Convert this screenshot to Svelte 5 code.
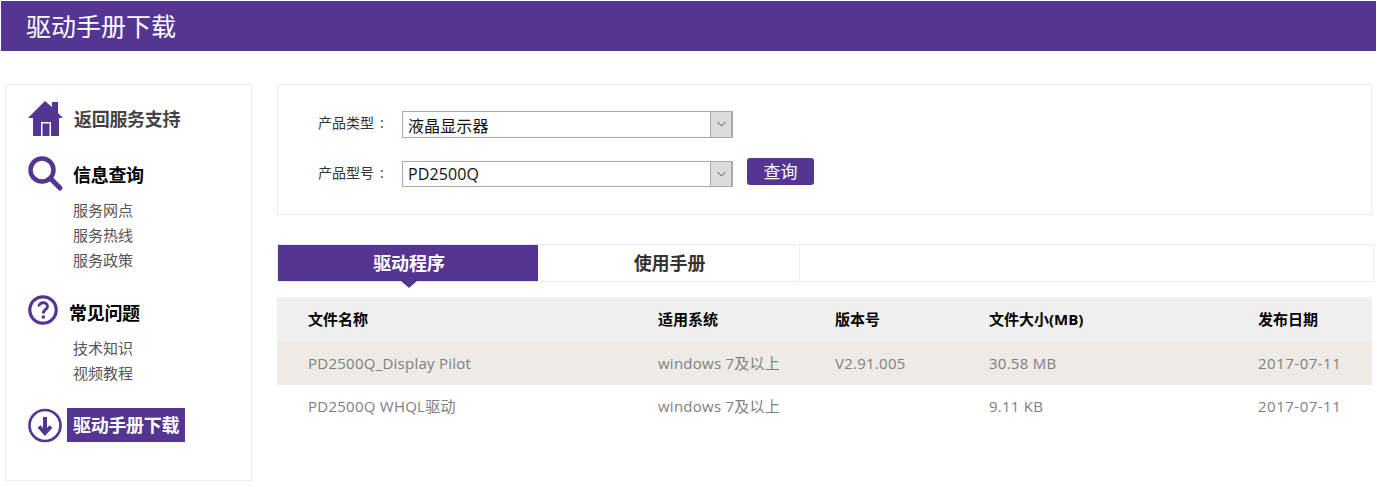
<script>
  const files = [
    { name: 'PD2500Q_Display Pilot', os: 'windows 7及以上', ver: 'V2.91.005', size: '30.58 MB', date: '2017-07-11' },
    { name: 'PD2500Q WHQL驱动', os: 'windows 7及以上', ver: '', size: '9.11 KB', date: '2017-07-11' }
  ];
</script>

<div class="page">
  <header class="top"><h1>驱动手册下载</h1></header>

  <div class="content">
    <aside class="side">
      <a class="item home">
        <svg class="ic" width="36" height="36" viewBox="0 0 36 36"><path fill="#553592" fill-rule="evenodd" d="M17 1 L24 7 V2 H30 V13 L35 18 H31 V36 H5 V18 H0 Z M13 22 V36 H14.500 V23.500 H21.500 V36 H23 V22 Z"/></svg>
        <span class="t1 grey">返回服务支持</span>
      </a>

      <div class="group search">
        <div class="item">
          <svg class="ic" width="36" height="36" viewBox="0 0 36 36"><circle cx="14" cy="14" r="11.500" fill="none" stroke="#553592" stroke-width="4.500"/><path d="M23 23 L32 32" stroke="#553592" stroke-width="5" stroke-linecap="round"/></svg>
          <span class="t1">信息查询</span>
        </div>
        <ul><li>服务网点</li><li>服务热线</li><li>服务政策</li></ul>
      </div>

      <div class="group faq">
        <div class="item">
          <svg class="ic small" width="31" height="31" viewBox="0 0 31 31"><circle cx="15" cy="15" r="13.200" fill="none" stroke="#553592" stroke-width="3.200"/><path d="M11 11.500 C11 6.500 19.500 6.500 19.500 11.500 C19.500 14.500 15.300 14.500 15.300 18.500" fill="none" stroke="#553592" stroke-width="2.800"/><circle cx="15.300" cy="22" r="1.800" fill="#553592"/></svg>
          <span class="t1">常见问题</span>
        </div>
        <ul><li>技术知识</li><li>视频教程</li></ul>
      </div>

      <div class="item current">
        <svg class="ic" width="35" height="35" viewBox="0 0 35 35"><circle cx="17" cy="17.500" r="15.500" fill="none" stroke="#553592" stroke-width="2.600"/><path d="M17 9 V24 M11 18.500 L17 25 L23 18.500" fill="none" stroke="#553592" stroke-width="4"/></svg>
        <span class="t1 active">驱动手册下载</span>
      </div>
    </aside>

    <main class="main">
      <section class="filter">
        <div class="row">
          <span class="label">产品类型<span class="colon">:</span></span>
          <div class="select"><span class="value">液晶显示器</span><span class="arrow"><svg width="11" height="7" viewBox="0 0 11 7"><path d="M1.500 1 L5.500 5 L9.500 1" fill="none" stroke="#555" stroke-width="1"/></svg></span></div>
        </div>
        <div class="row second">
          <span class="label">产品型号<span class="colon">:</span></span>
          <div class="select"><span class="value">PD2500Q</span><span class="arrow"><svg width="11" height="7" viewBox="0 0 11 7"><path d="M1.500 1 L5.500 5 L9.500 1" fill="none" stroke="#555" stroke-width="1"/></svg></span></div>
          <button class="query">查询</button>
        </div>
      </section>

      <nav class="tabs">
        <div class="tab on">驱动程序</div>
        <div class="tab">使用手册</div>
      </nav>

      <div class="table">
        <div class="tr head">
          <div>文件名称</div><div>适用系统</div><div>版本号</div><div>文件大小(MB)</div><div>发布日期</div>
        </div>
        {#each files as f, i}
          <div class="tr" class:odd={i === 0}>
            <div>{f.name}</div><div>{f.os}</div><div>{f.ver}</div><div>{f.size}</div><div>{f.date}</div>
          </div>
        {/each}
      </div>
    </main>
  </div>
</div>

<style>
  :global(body) { margin: 0; background: #fff; }
  .page { font-family: "Open Sans", "Noto Sans CJK SC", sans-serif; height: 487px; overflow: hidden; padding-top: 1px; box-sizing: border-box; }
  .top { margin: 0 1px; height: 50px; background: #553592; display: flex; align-items: center; padding-left: 25px; }
  h1 { margin: 0; font-size: 25px; font-weight: 400; color: #fff; line-height: 1; }
  .content { display: flex; gap: 25px; margin-top: 33px; padding-left: 5px; }

  .side { width: 247px; height: 397px; box-sizing: border-box; border: 1px solid #ececec; padding: 15px 0 0 22px; flex: none; }
  .item { display: flex; align-items: center; height: 36px; }
  .ic { flex: none; display: block; }
  .t1 { font-size: 18px; font-weight: 700; color: #000; line-height: 1; margin-left: 9px; letter-spacing: -0.3px; }
  .t1.grey { color: #444; margin-left: 10px; margin-top: 1px; }
  .search { margin-top: 20px; }
  .search .t1 { margin-top: 2px; }
  .faq { margin-top: 22px; }
  .faq .item { height: 31px; }
  .faq .t1 { margin-top: 4px; margin-left: 10px; }
  .group ul { list-style: none; margin: 0; padding: 0 0 0 45px; font-size: 15px; line-height: 25px; color: #555; }
  .search ul { margin-top: 6px; }
  .faq ul { margin-top: 10px; }
  .current { margin-top: 21px; }
  .t1.active { background: #553592; color: #fff; padding: 8px 6px; height: 34px; box-sizing: border-box; margin-left: 4px; line-height: 18px; }

  .main { width: 1097px; flex: none; }
  .filter { width: 1095px; height: 131px; box-sizing: border-box; border: 1px solid #ececec; padding: 26px 0 0 40px; }
  .row { display: flex; align-items: center; height: 27px; }
  .row.second { margin-top: 23px; }
  .label { width: 84px; font-size: 14px; color: #333; line-height: 1; margin-top: -4px; }
  .colon { margin-left: 6px; }
  .select { width: 331px; height: 27px; box-sizing: border-box; border: 1px solid #a9a9a9; display: flex; justify-content: space-between; align-items: stretch; font-size: 16px; color: #111; }
  .second .select { height: 26px; margin-bottom: 1px; }
  .value { padding-left: 5px; line-height: 29px; letter-spacing: 0.1px; }
  .second .value { line-height: 25px; }
  .arrow { width: 20px; background: #dcdcdc; border-left: 1px solid #aaa; border-right: 1px solid #aaa; display: flex; align-items: center; justify-content: center; }
  .query { width: 67px; height: 27px; margin: -7px 0 0 14px; border: 0; border-radius: 3px; background: #553592; color: #fff; font: 400 17px/27px "Open Sans", "Noto Sans CJK SC", sans-serif; padding: 0; }

  .tabs { margin-top: 29px; height: 38px; box-sizing: border-box; border: 1px solid #ececec; display: flex; }
  .tab { width: 261px; height: 36px; box-sizing: content-box; text-align: center; font-size: 18px; font-weight: 700; line-height: 36px; color: #333; border-right: 1px solid #ececec; position: relative; letter-spacing: -0.1px; text-indent: 2px; }
  .tab.on { width: 260px; background: #553592; color: #fff; border-right: 0; }
  .tab.on::after { content: ""; position: absolute; left: 123px; top: 36px; border: 8px solid transparent; border-bottom: 0; border-top: 7px solid #553592; }

  .table { margin-top: 15px; width: 1095px; }
  .tr { display: grid; grid-template-columns: 350px 177px 154px 269px 1fr; padding-left: 31px; height: 43px; box-sizing: border-box; padding-bottom: 2px; align-items: center; font-size: 15px; color: #808080; letter-spacing: 0.25px; line-height: 24px; }
  .tr.head { height: 44px; padding-bottom: 0; background: #f0f0f1; font-size: 15px; font-weight: 700; color: #000; letter-spacing: 0; }
  .tr.odd { height: 44px; padding-bottom: 0; background: #eeebe6; }
  .tr > div:last-child { letter-spacing: 0.5px; }
  .tr.head > div:last-child { letter-spacing: 0; }
</style>
